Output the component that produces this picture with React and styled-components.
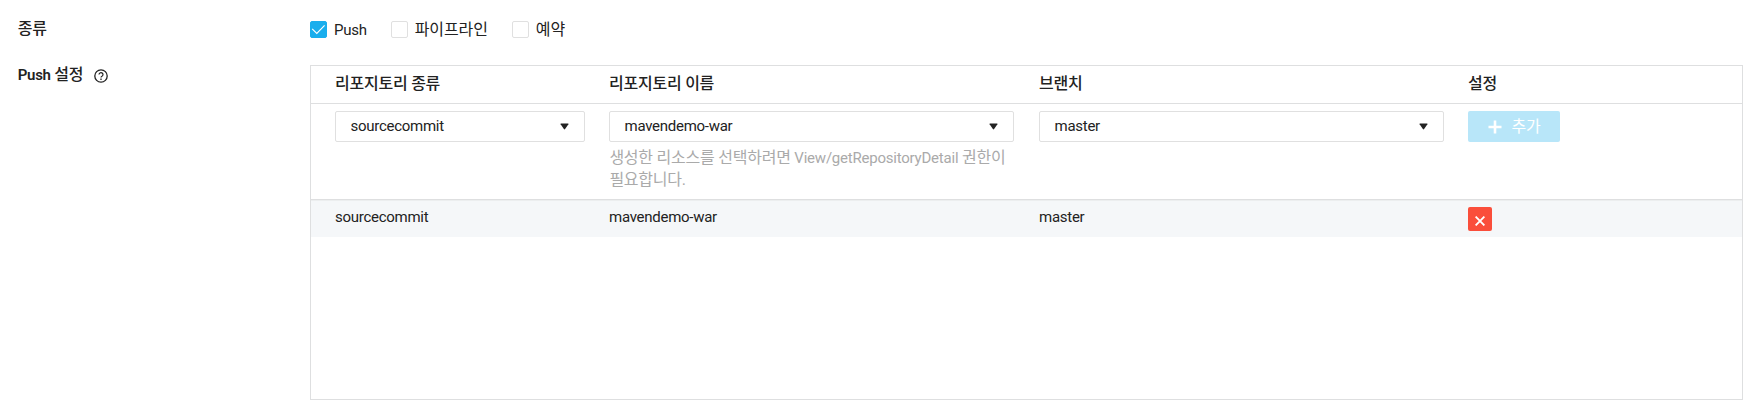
import React from "react";
import styled, { createGlobalStyle, css } from "styled-components";

const GlobalStyle = createGlobalStyle`
  *, *::before, *::after { box-sizing: border-box; }
  body {
    margin: 0;
    background: #fff;
    color: #222;
    font-family: Roboto, "Noto Sans CJK KR", sans-serif;
    font-size: 15px;
    letter-spacing: -0.27px;
    line-height: 22px;
  }
`;

const Form = styled.main`
  display: flex;
  flex-direction: column;
  width: 1749px;
  height: 410px;
  padding: 18px 6px 0 17px;
`;

const Field = styled.section`
  display: grid;
  grid-template-columns: 293px 1433px;
  & + & { margin-top: 25px; }
`;

const Label = styled.div`
  display: flex;
  align-items: center;
  gap: 11px;
  height: 22px;
  padding-left: 0.7px;
  font-weight: 500;
  margin-top: ${(p) => p.$offset || 0}px;
  svg { margin-top: 2px; }
`;

const LabelText = styled.span`
  font-weight: 600;
`;

const ko = css`
  font-size: 16px;
  letter-spacing: -0.24px;
`;

const Ko = styled.span`
  ${ko}
  font-weight: ${(p) => p.$weight || "inherit"};
`;

const Options = styled.div`
  display: flex;
  height: 22px;
  align-items: center;
`;

const Option = styled.label`
  display: flex;
  align-items: center;
  gap: 7px;
  margin-right: 24px;
`;

const OptionText = styled.span`
  padding-top: 2px;
`;

const KoOptionText = styled.span`
  ${ko}
  padding-top: 1px;
  letter-spacing: -0.08px;
`;

const Box = styled.span`
  display: grid;
  place-items: center;
  width: 17px;
  height: 17px;
  margin-top: 1px;
  border: 1px solid ${(p) => (p.$checked ? "#19aeed" : "#e0e0e0")};
  border-radius: 2px;
  background: ${(p) => (p.$checked ? "#19aeed" : "#fff")};
`;

const Table = styled.div`
  height: 335px;
  border: 1px solid #dedfe0;
`;

const Row = styled.div`
  display: grid;
  grid-template-columns: 250px 406px 405px 1fr;
  column-gap: 24px;
  padding: 0 24px;
`;

const HeadRow = styled(Row)`
  height: 38px;
  padding-top: 7px;
  border-bottom: 1px solid #dedfe0;
  font-weight: 500;
`;

const InputRow = styled(Row)`
  height: 96px;
  padding-top: 7px;
  border-bottom: 1px solid #dedfe0;
`;

const DataRow = styled(Row)`
  height: 37px;
  padding-top: 6px;
  background: #f5f7f9;
  border-top: 1px solid #eceeef;
`;

const Cell = styled.span`
  margin-top: -1px;
`;

const Select = styled.div`
  display: flex;
  align-items: center;
  justify-content: space-between;
  max-width: 405px;
  height: 31px;
  padding: 0 15px 0 14.5px;
  border: 1px solid #e0e0e0;
  border-radius: 2px;
`;

const SelectValue = styled.span`
  padding-bottom: 2px;
`;

const Hint = styled.p`
  margin: 5px 0 0;
  padding-left: 0.4px;
  color: #aaa;
  letter-spacing: -0.22px;
  white-space: nowrap;
`;

const AddButton = styled.button`
  display: flex;
  align-items: center;
  gap: 9.5px;
  width: 92px;
  height: 31px;
  padding: 0 0 3px 20px;
  border: 0;
  border-radius: 2px;
  background: #b8e6f9;
  color: #fff;
  font-family: inherit;
  ${ko}
  svg { margin-top: 3px; }
`;

const DeleteButton = styled.button`
  display: grid;
  place-items: center;
  width: 24px;
  height: 24px;
  padding: 3px 0 0;
  border: 0;
  border-radius: 2px;
  background: #fa4e3b;
`;

const HelpIcon = () => (
  <svg width="14" height="14" viewBox="0 0 14 14" fill="none" stroke="#222">
    <circle cx="7" cy="7" r="6.2" strokeWidth="1.3" />
    <path d="M5 5.6a2 1.9 0 1 1 3.2 1.5Q7 7.8 7 8.6" strokeWidth="1.2" />
    <path d="M7 9.6v1.3" strokeWidth="1.3" />
  </svg>
);

const CheckIcon = () => (
  <svg width="15" height="15" viewBox="0 0 15 15" fill="none" stroke="#fff" strokeWidth="1.1">
    <path d="M1.2 6.8l4.6 4.6 7.8-8" />
  </svg>
);

const Caret = () => (
  <svg width="9" height="7" viewBox="0 0 9 7">
    <path d="M1 .5h7q.8 0 .4.7L5.1 6q-.6.8-1.2 0L.6 1.2Q.2.5 1 .5z" fill="#222" />
  </svg>
);

const PlusIcon = () => (
  <svg width="14" height="14" viewBox="0 0 14 14" stroke="#fff" strokeWidth="2.6">
    <path d="M7 .5v13M.5 7h13" />
  </svg>
);

const CloseIcon = () => (
  <svg width="10" height="10" viewBox="0 0 10 10" stroke="#fff" strokeWidth="1.9">
    <path d="M.6.6l8.8 8.8M9.4.6L.6 9.4" />
  </svg>
);

const selected = ["sourcecommit", "mavendemo-war", "master"];

export default function App() {
  return (
    <>
      <GlobalStyle />
      <Form>
        <Field>
          <Label><Ko>종류</Ko></Label>
          <Options>
            <Option><Box $checked><CheckIcon /></Box><OptionText>Push</OptionText></Option>
            <Option><Box /><KoOptionText>파이프라인</KoOptionText></Option>
            <Option><Box /><KoOptionText>예약</KoOptionText></Option>
          </Options>
        </Field>
        <Field>
          <Label $offset={-1}><LabelText>Push <Ko $weight={500}>설정</Ko></LabelText><HelpIcon /></Label>
          <Table>
            <HeadRow>
              <Ko>리포지토리 종류</Ko>
              <Ko>리포지토리 이름</Ko>
              <Ko>브랜치</Ko>
              <Ko>설정</Ko>
            </HeadRow>
            <InputRow>
              <Select><SelectValue>{selected[0]}</SelectValue><Caret /></Select>
              <div>
                <Select><SelectValue>{selected[1]}</SelectValue><Caret /></Select>
                <Hint>
                  <Ko>생성한 리소스를 선택하려면 </Ko>View/getRepositoryDetail<Ko> 권한이<br />필요합니다.</Ko>
                </Hint>
              </div>
              <Select><SelectValue>{selected[2]}</SelectValue><Caret /></Select>
              <AddButton><PlusIcon />추가</AddButton>
            </InputRow>
            <DataRow>
              {selected.map((value) => <Cell key={value}>{value}</Cell>)}
              <DeleteButton aria-label="삭제"><CloseIcon /></DeleteButton>
            </DataRow>
          </Table>
        </Field>
      </Form>
    </>
  );
}
